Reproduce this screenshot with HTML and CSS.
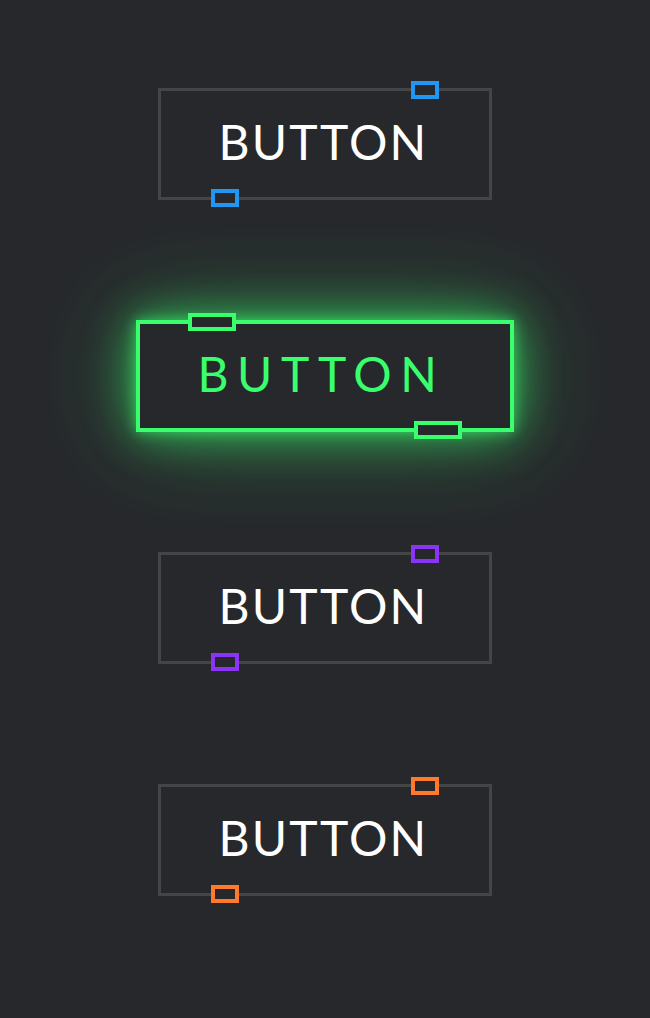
FILE: index.html
```html
<!DOCTYPE html>
<html lang="en">
<head>
<meta charset="utf-8">
<title>Buttons</title>
<link rel="stylesheet" href="styles.css">
</head>
<body>
<main class="stack">
  <a class="btn btn-blue"><span class="tag tag-top"></span>BUTTON<span class="tag tag-bottom"></span></a>
  <a class="btn btn-green is-hover"><span class="tag tag-top"></span>BUTTON<span class="tag tag-bottom"></span></a>
  <a class="btn btn-purple"><span class="tag tag-top"></span>BUTTON<span class="tag tag-bottom"></span></a>
  <a class="btn btn-orange"><span class="tag tag-top"></span>BUTTON<span class="tag tag-bottom"></span></a>
</main>
</body>
</html>
```
FILE: styles.css
```css
html, body {
  margin: 0;
  padding: 0;
}
body {
  background: #27282c;
  min-height: 1018px;
  font-family: "Lato", "Liberation Sans", sans-serif;
}
.stack {
  display: flex;
  flex-direction: column;
  align-items: center;
  gap: 120px;
  padding-top: 88px;
}
.btn {
  position: relative;
  display: inline-block;
  box-sizing: border-box;
  height: 112px;
  padding: 27px 61px 0 58px;
  border: 3px solid #444547;
  color: #ffffff;
  font-size: 48px;
  line-height: 48px;
  font-weight: 400;
  letter-spacing: 2.2px;
  text-decoration: none;
  white-space: nowrap;
}
.tag {
  position: absolute;
  box-sizing: border-box;
  width: 28px;
  height: 18px;
  border: 4px solid var(--clr);
  background: #27282c;
}
.tag-top {
  top: -10px;
  right: 50px;
}
.tag-bottom {
  bottom: -10px;
  left: 50px;
}
.btn-blue { --clr: #2196f3; }
.btn-green { --clr: #39ff6d; }
.btn-purple { --clr: #8b34f5; }
.btn-orange { --clr: #ff7a2c; }

.btn.is-hover {
  border: 4px solid var(--clr);
  color: var(--clr);
  letter-spacing: 8.6px;
  padding: 26px 64px 0 57px;
  box-shadow: 0 0 12px rgba(57, 255, 109, 0.6), 0 0 45px rgba(57, 255, 109, 0.65), 0 0 100px rgba(57, 255, 109, 0.4);
}
.btn.is-hover .tag {
  width: 48px;
}
.btn.is-hover .tag-top {
  top: -11px;
  left: 48px;
  right: auto;
}
.btn.is-hover .tag-bottom {
  bottom: -11px;
  right: 48px;
  left: auto;
}
```
